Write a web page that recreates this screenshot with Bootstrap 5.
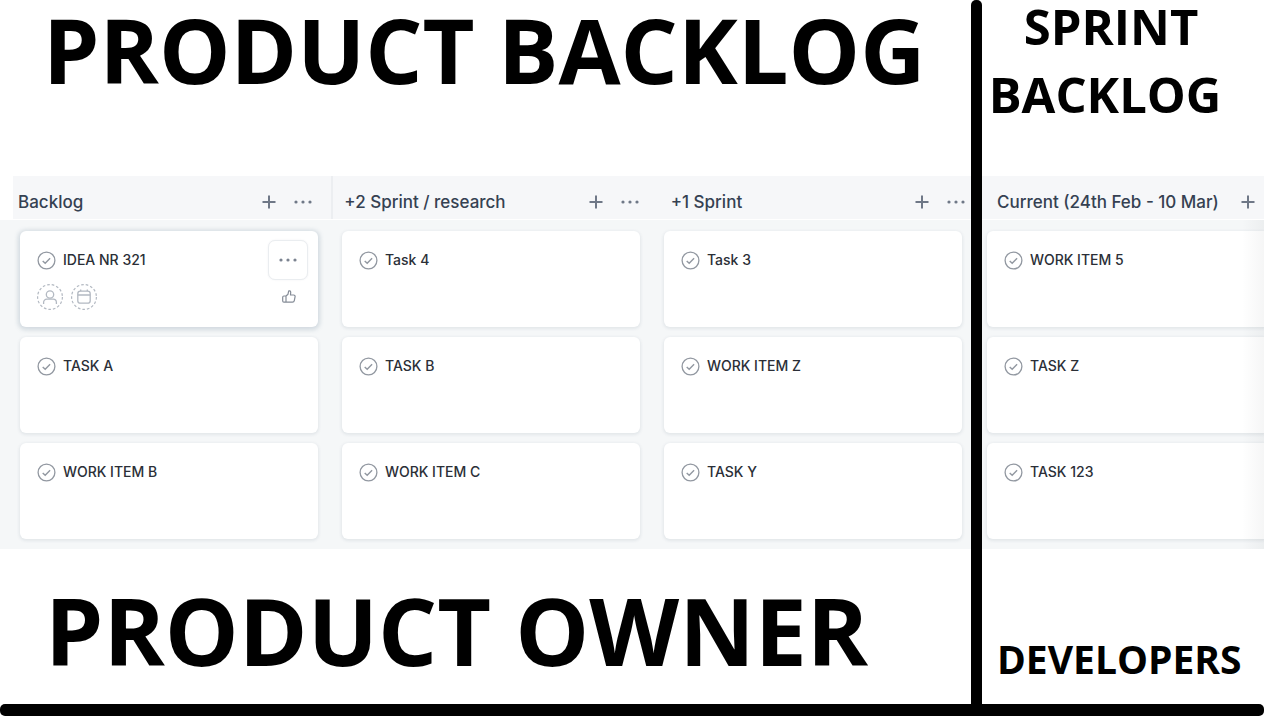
<!DOCTYPE html>
<html lang="en">
<head>
<meta charset="utf-8">
<meta name="viewport" content="width=device-width, initial-scale=1">
<title>Product backlog and sprint backlog</title>
<link href="https://cdn.jsdelivr.net/npm/bootstrap@5.3.0/dist/css/bootstrap.min.css" rel="stylesheet">
<style>
  body { background: #fff; font-family: Inter, "Liberation Sans", sans-serif; }
  .split { display: grid; grid-template-columns: minmax(0, 971fr) 11px minmax(0, 282fr); }
  .rule-v { background: #000; border-radius: 5px 5px 0 0; }
  .rule-h { height: 12px; margin-bottom: 5px; background: #000; border-radius: 5px; }

  .caption { font-family: "Open Sans", "Noto Sans", sans-serif; font-weight: 700; color: #000; margin: 0; white-space: nowrap; }
  .caption-xl { font-size: 90px; line-height: 98px; padding-left: 43px; }
  .caption-xxl { font-size: 93px; line-height: 100px; padding-left: 45px; }
  .caption-lg { font-size: 49px; line-height: 52px; display: flex; flex-direction: column; gap: 16px; padding-right: 36px; text-align: center; }
  .caption-lg .lead-word { padding-left: 12px; }
  .caption-md { font-size: 39px; line-height: 56px; padding-left: 15px; }
  .top-area { height: 176px; }
  .bottom-area { padding-top: 31px; }
  .bottom-area-sm { padding-top: 82px; }

  .heads { height: 43px; background: #f6f7f9; }
  .heads-left { display: grid; grid-template-columns: repeat(3, minmax(0, 1fr)); gap: 28px; margin-left: 13px; padding: 8px 2px 0 5px; }
  .heads-right { padding: 8px 3px 0 15px; }
  .col-head { display: flex; align-items: center; height: 35px; position: relative; }
  .divided::before { content: ""; position: absolute; left: -13px; top: -8px; bottom: 0; width: 2px; background: #eceef1; }
  .col-head h2 { flex: 1; margin: 0; font-size: 17px; line-height: 24px; font-weight: 500; color: #354152; white-space: nowrap; }
  .tool { width: 26px; height: 26px; padding: 0; border: 0; background: none; color: #6f7887; display: flex; align-items: center; justify-content: center; flex: none; }

  .lanes { background: #f5f7f8; margin-top: 1px; padding-top: 11px; padding-bottom: 10px; overflow: hidden; }
  .lanes-left { display: grid; grid-template-columns: repeat(3, minmax(0, 1fr)); gap: 24px; padding-left: 20px; padding-right: 9px; }
  .lanes-right { padding-left: 5px; position: relative; }
  .lanes-right::after { content: ""; position: absolute; top: 0; right: 0; bottom: 0; width: 22px; background: linear-gradient(90deg, rgba(120,125,130,0), rgba(120,125,130,.07)); }
  .lane { display: flex; flex-direction: column; gap: 10px; margin: 0; padding: 0; list-style: none; }
  .task { height: 96px; background: #fff; border-radius: 6px; padding: 9px 10px 0 17px; box-shadow: 0 1px 3px 1px rgba(60,80,100,.09); }
  .lanes-right .task { border-radius: 6px 0 0 6px; }
  .task.active { box-shadow: 0 1px 4px 2px rgba(90,120,140,.22); }
  .task-line { display: flex; align-items: center; height: 40px; gap: 7px; }
  .task-line h3 { flex: 1; margin: 0; font-size: 14px; line-height: 20px; font-weight: 500; color: #2b2f37; white-space: nowrap; }
  .tick { width: 19px; height: 19px; padding: 0; border: 0; background: none; color: #9298a1; display: flex; flex: none; }
  .more { width: 40px; height: 40px; padding: 0; background: #fff; border: 1px solid #eaedf0; border-radius: 7px; color: #7b8390; display: flex; align-items: center; justify-content: center; box-shadow: 0 0 2px rgba(60,80,100,.08); }
  .meta { display: flex; align-items: center; gap: 8px; height: 34px; }
  .ghost { width: 26px; height: 26px; padding: 0; border: 0; background: none; color: #b3b9c2; display: flex; }
  .thumb { width: 16px; height: 16px; padding: 0; border: 0; background: none; color: #858c97; display: flex; margin-left: auto; margin-right: 11px; }
</style>
</head>
<body class="d-flex flex-column min-vh-100">
<svg class="d-none" aria-hidden="true">
  <symbol id="i-check" viewBox="0 0 19 19"><circle cx="9.500" cy="9.500" r="8.400" fill="none" stroke="currentColor" stroke-width="1.300"/><path d="M5.700 9.900l2.500 2.400 4.900-5" fill="none" stroke="currentColor" stroke-width="1.400"/></symbol>
  <symbol id="i-plus" viewBox="0 0 14 14"><path d="M7 .5v13M.5 7h13" fill="none" stroke="currentColor" stroke-width="2"/></symbol>
  <symbol id="i-dots" viewBox="0 0 18 4"><circle cx="2" cy="2" r="1.600" fill="currentColor"/><circle cx="9" cy="2" r="1.600" fill="currentColor"/><circle cx="16" cy="2" r="1.600" fill="currentColor"/></symbol>
</svg>

<main class="split flex-grow-1">
  <section class="d-flex flex-column" aria-label="Product backlog">
    <div class="top-area"><h1 class="caption caption-xl">PRODUCT BACKLOG</h1></div>
    <div class="heads heads-left">
      <div class="col-head"><h2>Backlog</h2>
        <div class="d-flex gap-2"><button class="tool" type="button" aria-label="Add task"><svg width="14" height="14"><use href="#i-plus"/></svg></button><button class="tool" type="button" aria-label="More"><svg width="18" height="4"><use href="#i-dots"/></svg></button></div></div>
      <div class="col-head divided"><h2>+2 Sprint / research</h2>
        <div class="d-flex gap-2"><button class="tool" type="button" aria-label="Add task"><svg width="14" height="14"><use href="#i-plus"/></svg></button><button class="tool" type="button" aria-label="More"><svg width="18" height="4"><use href="#i-dots"/></svg></button></div></div>
      <div class="col-head"><h2>+1 Sprint</h2>
        <div class="d-flex gap-2"><button class="tool" type="button" aria-label="Add task"><svg width="14" height="14"><use href="#i-plus"/></svg></button><button class="tool" type="button" aria-label="More"><svg width="18" height="4"><use href="#i-dots"/></svg></button></div></div>
    </div>
    <div class="lanes lanes-left">
      <ul class="lane">
        <li class="task active">
          <div class="task-line"><button class="tick" type="button" aria-label="Complete"><svg width="19" height="19"><use href="#i-check"/></svg></button><h3>IDEA NR 321</h3><button class="more" type="button" aria-label="Task options"><svg width="18" height="4"><use href="#i-dots"/></svg></button></div>
          <div class="meta">
            <button class="ghost" type="button" aria-label="Assign"><svg width="26" height="26" viewBox="0 0 26 26" fill="none" stroke="currentColor"><circle cx="13" cy="13" r="12.400" stroke-width="1.200" stroke-dasharray="2.600 2"/><circle cx="13" cy="10.500" r="3.700" stroke-width="1.300"/><path d="M6.600 20v-1.500c0-2 1.300-3.300 3.300-3.300h6.200c2 0 3.300 1.300 3.300 3.300V20" stroke-width="1.300"/></svg></button>
            <button class="ghost" type="button" aria-label="Due date"><svg width="26" height="26" viewBox="0 0 26 26" fill="none" stroke="currentColor"><circle cx="13" cy="13" r="12.400" stroke-width="1.200" stroke-dasharray="2.600 2"/><rect x="6.800" y="7.200" width="12.400" height="12" rx="2.500" stroke-width="1.300"/><path d="M6.800 11h12.400M9.700 5.600v1.600M16.300 5.600v1.600" stroke-width="1.300"/></svg></button>
            <button class="thumb" type="button" aria-label="Like"><svg width="16" height="16" viewBox="0 0 16 16" fill="none" stroke="currentColor" stroke-width="1.200" stroke-linejoin="round"><path d="M5 7L7 5.200 7.600 2.300c.2-.8 2-.6 2.100.8L9.500 6h3.200c1 0 1.600.8 1.400 1.700l-.8 4c-.2 1-.9 1.500-1.800 1.500H5zM5 7H2.900c-.8 0-1.200.5-1.200 1.200v3.800c0 .7.4 1.200 1.200 1.200H5"/></svg></button>
          </div>
        </li>
        <li class="task"><div class="task-line"><button class="tick" type="button" aria-label="Complete"><svg width="19" height="19"><use href="#i-check"/></svg></button><h3>TASK A</h3></div></li>
        <li class="task"><div class="task-line"><button class="tick" type="button" aria-label="Complete"><svg width="19" height="19"><use href="#i-check"/></svg></button><h3>WORK ITEM B</h3></div></li>
      </ul>
      <ul class="lane">
        <li class="task"><div class="task-line"><button class="tick" type="button" aria-label="Complete"><svg width="19" height="19"><use href="#i-check"/></svg></button><h3>Task 4</h3></div></li>
        <li class="task"><div class="task-line"><button class="tick" type="button" aria-label="Complete"><svg width="19" height="19"><use href="#i-check"/></svg></button><h3>TASK B</h3></div></li>
        <li class="task"><div class="task-line"><button class="tick" type="button" aria-label="Complete"><svg width="19" height="19"><use href="#i-check"/></svg></button><h3>WORK ITEM C</h3></div></li>
      </ul>
      <ul class="lane">
        <li class="task"><div class="task-line"><button class="tick" type="button" aria-label="Complete"><svg width="19" height="19"><use href="#i-check"/></svg></button><h3>Task 3</h3></div></li>
        <li class="task"><div class="task-line"><button class="tick" type="button" aria-label="Complete"><svg width="19" height="19"><use href="#i-check"/></svg></button><h3>WORK ITEM Z</h3></div></li>
        <li class="task"><div class="task-line"><button class="tick" type="button" aria-label="Complete"><svg width="19" height="19"><use href="#i-check"/></svg></button><h3>TASK Y</h3></div></li>
      </ul>
    </div>
    <div class="bottom-area"><p class="caption caption-xxl">PRODUCT OWNER</p></div>
  </section>

  <div class="rule-v"></div>

  <section class="d-flex flex-column" aria-label="Sprint backlog">
    <div class="top-area"><h1 class="caption caption-lg"><span class="lead-word">SPRINT</span> <span>BACKLOG</span></h1></div>
    <div class="heads heads-right">
      <div class="col-head"><h2>Current (24th Feb - 10 Mar)</h2><button class="tool" type="button" aria-label="Add task"><svg width="14" height="14"><use href="#i-plus"/></svg></button></div>
    </div>
    <div class="lanes lanes-right">
      <ul class="lane">
        <li class="task"><div class="task-line"><button class="tick" type="button" aria-label="Complete"><svg width="19" height="19"><use href="#i-check"/></svg></button><h3>WORK ITEM 5</h3></div></li>
        <li class="task"><div class="task-line"><button class="tick" type="button" aria-label="Complete"><svg width="19" height="19"><use href="#i-check"/></svg></button><h3>TASK Z</h3></div></li>
        <li class="task"><div class="task-line"><button class="tick" type="button" aria-label="Complete"><svg width="19" height="19"><use href="#i-check"/></svg></button><h3>TASK 123</h3></div></li>
      </ul>
    </div>
    <div class="bottom-area-sm"><p class="caption caption-md">DEVELOPERS</p></div>
  </section>
</main>
<div class="rule-h"></div>
<script src="https://cdn.jsdelivr.net/npm/bootstrap@5.3.0/dist/js/bootstrap.bundle.min.js"></script>
</body>
</html>
